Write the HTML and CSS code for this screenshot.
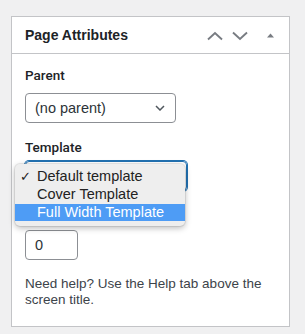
FILE: index.html
```html
<!doctype html>
<html lang="en">
  <head>
    <meta charset="UTF-8" />
    <meta name="viewport" content="width=device-width, initial-scale=1.0" />
    <title>Page Attributes</title>
    <link rel="stylesheet" href="styles.css">
  </head>
  <body>
    <div class="postbox">
      <div class="postbox-header">
        <h2>Page Attributes</h2>
        <div class="handle-actions">
          <svg class="handle-up" width="16" height="10" viewBox="0 0 16 10"><path d="M1 8.5 L8 2 L15 8.5" fill="none" stroke="#787c82" stroke-width="1.9"/></svg>
          <svg class="handle-down" width="16" height="10" viewBox="0 0 16 10"><path d="M1 1.5 L8 8 L15 1.5" fill="none" stroke="#787c82" stroke-width="1.9"/></svg>
          <svg class="handle-toggle" width="7" height="5" viewBox="0 0 7 5"><path d="M0 4.5 L3.5 0.5 L7 4.5 Z" fill="#787c82"/></svg>
        </div>
      </div>
      <div class="inside">
        <p class="attr-label">Parent</p>
        <div class="select parent-select">
          <span>(no parent)</span>
          <svg width="10" height="6" viewBox="0 0 10 6"><path d="M1 1 L5 5 L9 1" fill="none" stroke="#50575e" stroke-width="1.5"/></svg>
        </div>
        <p class="attr-label template-label">Template</p>
        <div class="template-wrap">
          <div class="select template-select focused"></div>
          <ul class="dropdown">
            <li><span class="check">✓</span>Default template</li>
            <li>Cover Template</li>
            <li class="highlight">Full Width Template</li>
          </ul>
        </div>
        <p class="attr-label order-label">Order</p>
        <div class="number-input">0</div>
        <p class="help">Need help? Use the Help tab above the screen title.</p>
      </div>
    </div>
  </body>
</html>
```

FILE: styles.css
```css
body {
  margin: 0;
  padding: 16px 15px 10px 11px;
  background-color: #f0f0f1;
  font-family: "Liberation Sans", Arial, sans-serif;
  color: #1d2327;
}

.postbox {
  width: 277px;
  border: 1px solid #c3c4c7;
  background-color: #fff;
}

.postbox-header {
  display: flex;
  align-items: center;
  justify-content: space-between;
  height: 36px;
  border-bottom: 1px solid #c3c4c7;
  padding-left: 13px;
}
.postbox-header h2 {
  margin: 0;
  font-size: 14px;
  font-weight: 600;
  color: #1d2327;
}

.handle-actions {
  display: flex;
  align-items: center;
  padding: 1px 15px 0 0;
}
.handle-down {
  margin-left: 9px;
}
.handle-toggle {
  margin-left: 19px;
}

.inside {
  padding: 13px 13px 18px;
}

.attr-label {
  margin: 0 0 10px;
  font-family: Roboto, "Liberation Sans", sans-serif;
  font-size: 13.5px;
  line-height: 16px;
  font-weight: 500;
  color: #1d2327;
}
.template-label {
  margin-bottom: 6px;
}
.order-label {
  margin-bottom: 7px;
  visibility: hidden;
}

.select {
  box-sizing: border-box;
  height: 30px;
  border: 1px solid #8c8f94;
  border-radius: 4px;
  display: flex;
  align-items: center;
  justify-content: space-between;
  padding: 0 10px 0 9px;
  font-size: 14.5px;
  color: #2c3338;
  margin-bottom: 16px;
}
.parent-select {
  width: 151px;
}

.template-wrap {
  position: relative;
}
.template-select {
  width: 162px;
}
.template-select.focused {
  border-color: #2271b1;
  box-shadow: 0 0 0 1px #2271b1;
}

.dropdown {
  position: absolute;
  left: -10px;
  top: 3px;
  width: 170px;
  margin: 0;
  padding: 4px 0 5px;
  list-style: none;
  background-color: #eeeeee;
  border-radius: 5px;
  box-shadow: 0 2px 6px rgba(0, 0, 0, 0.28), 0 0 0 1px rgba(0, 0, 0, 0.07);
  font-size: 14.5px;
  color: #222;
}
.dropdown li {
  position: relative;
  height: 17px;
  line-height: 17px;
  padding-left: 22px;
}
.dropdown li + li {
  margin-top: 1px;
}
.dropdown .check {
  position: absolute;
  left: 5px;
  font-family: "DejaVu Sans", sans-serif;
  font-size: 13px;
}
.dropdown .highlight {
  background-color: #4e9cf5;
  color: #fff;
}

.number-input {
  box-sizing: border-box;
  width: 53px;
  height: 30px;
  border: 1px solid #8c8f94;
  border-radius: 4px;
  padding-left: 9px;
  line-height: 28px;
  font-size: 14.5px;
  color: #2c3338;
}

.help {
  margin: 16px 0 0;
  font-size: 13.5px;
  line-height: 16px;
  color: #3c434a;
}
```
